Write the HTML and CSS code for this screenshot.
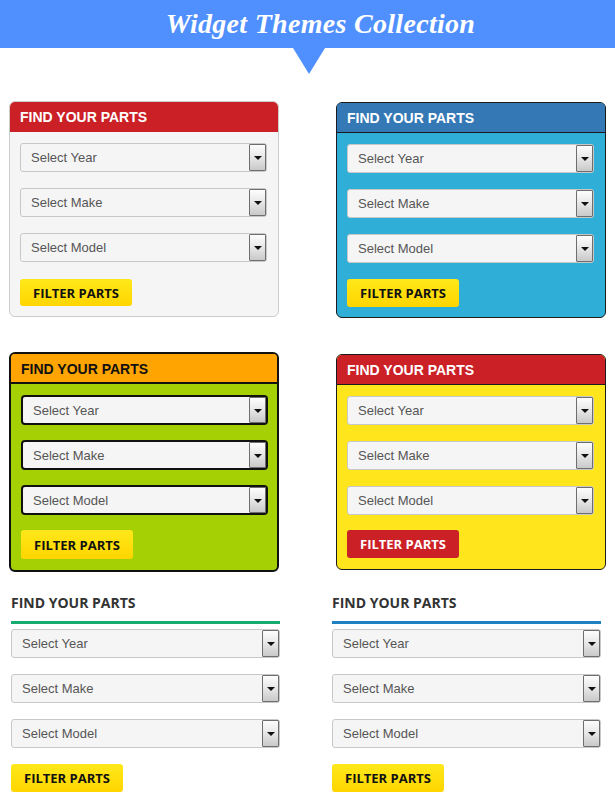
FILE: index.html
```html
<!DOCTYPE html>
<html>
<head>
<meta charset="utf-8">
<link rel="stylesheet" href="styles.css">
</head>
<body>
<header class="banner">
  <h1>Widget Themes Collection</h1>
  <span class="pointer"></span>
</header>

<main class="grid">
  <section class="widget w-gray">
    <h2 class="w-head">FIND YOUR PARTS</h2>
    <div class="w-body">
      <div class="sel"><span>Select Year</span><i class="arr"></i></div>
      <div class="sel"><span>Select Make</span><i class="arr"></i></div>
      <div class="sel"><span>Select Model</span><i class="arr"></i></div>
      <button class="btn">FILTER PARTS</button>
    </div>
  </section>

  <section class="widget w-blue">
    <h2 class="w-head">FIND YOUR PARTS</h2>
    <div class="w-body">
      <div class="sel"><span>Select Year</span><i class="arr"></i></div>
      <div class="sel"><span>Select Make</span><i class="arr"></i></div>
      <div class="sel"><span>Select Model</span><i class="arr"></i></div>
      <button class="btn">FILTER PARTS</button>
    </div>
  </section>

  <section class="widget w-green">
    <h2 class="w-head">FIND YOUR PARTS</h2>
    <div class="w-body">
      <div class="sel"><span>Select Year</span><i class="arr"></i></div>
      <div class="sel"><span>Select Make</span><i class="arr"></i></div>
      <div class="sel"><span>Select Model</span><i class="arr"></i></div>
      <button class="btn">FILTER PARTS</button>
    </div>
  </section>

  <section class="widget w-yellow">
    <h2 class="w-head">FIND YOUR PARTS</h2>
    <div class="w-body">
      <div class="sel"><span>Select Year</span><i class="arr"></i></div>
      <div class="sel"><span>Select Make</span><i class="arr"></i></div>
      <div class="sel"><span>Select Model</span><i class="arr"></i></div>
      <button class="btn btn-red">FILTER PARTS</button>
    </div>
  </section>

  <section class="plain p-green">
    <h2 class="p-head">FIND YOUR PARTS</h2>
    <div class="p-body">
      <div class="sel"><span>Select Year</span><i class="arr"></i></div>
      <div class="sel"><span>Select Make</span><i class="arr"></i></div>
      <div class="sel"><span>Select Model</span><i class="arr"></i></div>
      <button class="btn">FILTER PARTS</button>
    </div>
  </section>

  <section class="plain p-blue">
    <h2 class="p-head">FIND YOUR PARTS</h2>
    <div class="p-body">
      <div class="sel"><span>Select Year</span><i class="arr"></i></div>
      <div class="sel"><span>Select Make</span><i class="arr"></i></div>
      <div class="sel"><span>Select Model</span><i class="arr"></i></div>
      <button class="btn">FILTER PARTS</button>
    </div>
  </section>
</main>
</body>
</html>
```

FILE: styles.css
```css
* { box-sizing: border-box; }
html, body { margin: 0; padding: 0; background: #fff; }
body { width: 615px; height: 800px; overflow: hidden; font-family: "Liberation Sans", Arial, sans-serif; }

.banner {
  position: relative;
  height: 48px;
  background: #4f8ffe;
  display: flex;
  align-items: center;
  justify-content: center;
}
.banner h1 {
  margin: 0 0 0 26px;
  font-family: "Liberation Serif", "Times New Roman", serif;
  font-style: italic;
  font-weight: bold;
  font-size: 28px;
  color: #fff;
  letter-spacing: 0.3px;
}
.pointer {
  position: absolute;
  left: 293px;
  top: 48px;
  width: 0; height: 0;
  border-left: 16px solid transparent;
  border-right: 16px solid transparent;
  border-top: 26px solid #4f8ffe;
}

.grid {
  display: grid;
  grid-template-columns: 270px 270px;
  column-gap: 57px;
  align-items: start;
  padding: 53px 0 0 9px;
}

.widget {
  border-radius: 6px;
  overflow: hidden;
  display: flex;
  flex-direction: column;
  height: 216px;
}
.w-head {
  margin: 0;
  height: 30px;
  font-size: 14px;
  font-weight: bold;
  line-height: 31px;
  padding-left: 10px;
  color: #fff;
  overflow: hidden;
}
.w-body {
  display: flex;
  flex-direction: column;
  align-items: flex-start;
  gap: 16px;
  padding: 11px 11px 0 10px;
}
.w-body .sel { align-self: stretch; }

.sel {
  height: 29px;
  border: 1px solid #c8c8c8;
  border-radius: 3px;
  background: #f5f5f5;
  display: flex;
  align-items: center;
  justify-content: space-between;
  font-size: 13px;
  color: #555;
}
.sel span { padding-left: 10px; }
.arr {
  align-self: stretch;
  width: 17px;
  border: 1px solid #6e6e6e;
  border-radius: 1px;
  background: linear-gradient(#fdfdfd, #e9e9e9 45%, #c9c9c9);
  position: relative;
}
.arr::after {
  content: "";
  position: absolute;
  left: 4px; top: 11px;
  border-left: 4px solid transparent;
  border-right: 4px solid transparent;
  border-top: 4px solid #111;
}

.btn {
  height: 28px;
  width: 112px;
  border: 0;
  border-radius: 3px;
  background: linear-gradient(#ffe81a, #ffd500);
  font-family: "Open Sans", "Liberation Sans", sans-serif;
  font-weight: bold;
  font-size: 13px;
  color: #111;
  padding: 0;
}
.btn-red { background: #cc2027; color: #fff; }

/* theme 1 */
.w-gray { border: 1px solid #cccccc; background: #f5f5f5; }
.w-gray .w-head { background: #cc2027; margin: -1px -1px 0 -1px; padding-left: 11px; height: 31px; line-height: 33px; }
.w-gray .btn { margin-top: 1px; height: 27px; }

/* theme 2 */
.w-blue { border: 1px solid #1b1b1b; background: #2fafd7; margin-top: 1px; }
.w-blue .w-head { background: #3478b5; border-bottom: 1px solid #1b1b1b; }

/* theme 3 */
.w-green { border: 2px solid #111; background: #a5d004; margin-top: 34px; height: 220px; }
.w-green .w-head { background: #ffa400; border-bottom: 2px solid #111; color: #111; line-height: 30px; }
.w-green .w-body { padding: 11px 9px 0 10px; gap: 15px; }
.w-green .sel { border: 2px solid #111; border-radius: 4px; height: 30px; }
.w-green .btn { margin-top: 0; height: 29px; }

/* theme 4 */
.w-yellow { border: 1px solid #1b1b1b; background: #fee51c; margin-top: 36px; }
.w-yellow .w-head { background: #cc2027; border-bottom: 1px solid #1b1b1b; }
.w-yellow .btn { margin-top: -1px; }

/* plain */
.plain { display: flex; flex-direction: column; margin-top: 22px; }
.p-head {
  margin: 0;
  font-family: "Open Sans", "Liberation Sans", sans-serif;
  font-size: 14px;
  font-weight: bold;
  color: #333;
  line-height: 18px;
  padding-bottom: 9px;
  margin-bottom: 5px;
}
.p-green { margin-left: 2px; width: 269px; }
.p-green .p-head { border-bottom: 3px solid #17ab72; }
.p-blue { margin-left: -4px; width: 269px; }
.p-blue .p-head { border-bottom: 3px solid #1f80c2; }
.p-body { display: flex; flex-direction: column; align-items: flex-start; gap: 16px; }
.p-body .sel { align-self: stretch; }
```
